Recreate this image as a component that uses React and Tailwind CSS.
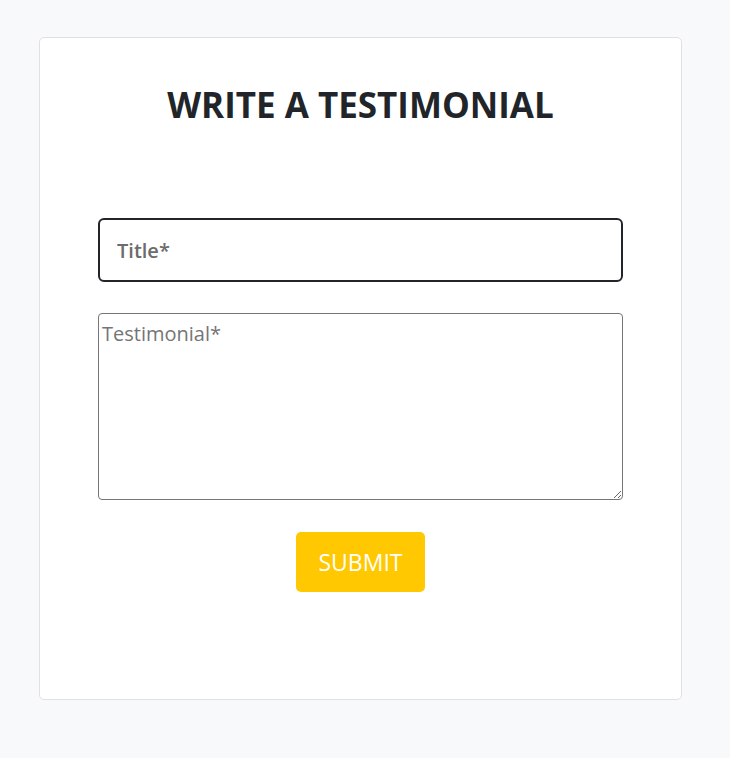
import React from "react";

export default function App() {
  return (
    <div className="min-h-[758px] bg-[#f8f9fa] pt-[37px] font-['Open_Sans',sans-serif]">
      <div className="ml-[39px] w-[643px] h-[663px] bg-white border border-[#dee2e6] rounded-[5px] px-[58px] pt-[43px]">
        <h1 className="text-center text-[35px] font-bold text-[#212529] leading-[48px]">
          WRITE A TESTIMONIAL
        </h1>
        <form className="mt-[89px] flex flex-col items-center" onSubmit={(e) => e.preventDefault()}>
          <input
            type="text"
            placeholder="Title*"
            className="w-full h-[64px] border-2 border-[#212529] rounded-[6px] px-[17px] text-[20px] font-semibold text-[#212529] placeholder:text-[#6c6c6c] outline-none"
          />
          <textarea
            placeholder="Testimonial*"
            className="mt-[31px] w-full h-[187px] border border-[#767676] rounded-[4px] px-[3px] pt-[6px] pb-[5px] text-[20px] leading-[28px] text-[#212529] placeholder:text-[#757575] outline-none"
          />
          <button
            type="submit"
            className="mt-[32px] w-[129px] h-[60px] bg-[#ffc800] rounded-[5px] text-white text-[23px]"
          >
            SUBMIT
          </button>
        </form>
      </div>
    </div>
  );
}
